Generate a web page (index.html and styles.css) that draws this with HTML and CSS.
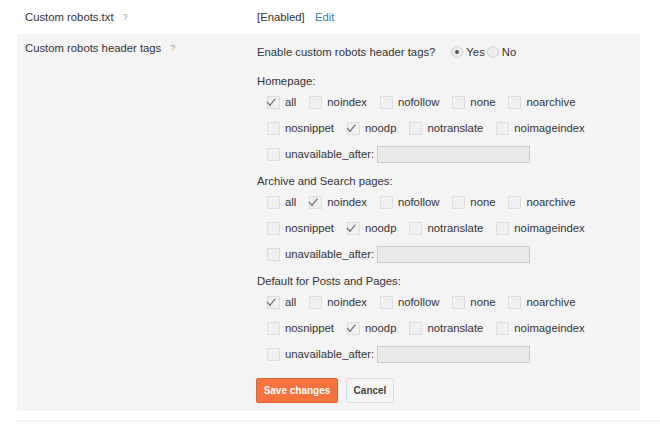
FILE: index.html
```html
<!DOCTYPE html>
<html>
<head>
<meta charset="utf-8">
<link rel="stylesheet" href="styles.css">
</head>
<body>
<div class="page">
  <div class="row row-top">
    <div class="label">Custom robots.txt <span class="help">?</span></div>
    <div class="value">[Enabled] <a class="edit" href="#">Edit</a></div>
  </div>
  <div class="row panel">
    <div class="label label-panel">Custom robots header tags <span class="help">?</span></div>
    <div class="value value-panel">
      <div class="enable">
        <span>Enable custom robots header tags?</span>
        <span class="radios">
          <span class="radio on"></span><span class="rlabel">Yes</span>
          <span class="radio"></span><span class="rlabel">No</span>
        </span>
      </div>

      <div class="section first">
        <div class="sec-title">Homepage:</div>
        <div class="cbrow">
          <span class="cb on"></span><span class="cbl">all</span>
          <span class="cb"></span><span class="cbl">noindex</span>
          <span class="cb"></span><span class="cbl">nofollow</span>
          <span class="cb"></span><span class="cbl">none</span>
          <span class="cb"></span><span class="cbl">noarchive</span>
        </div>
        <div class="cbrow">
          <span class="cb"></span><span class="cbl">nosnippet</span>
          <span class="cb on"></span><span class="cbl">noodp</span>
          <span class="cb"></span><span class="cbl">notranslate</span>
          <span class="cb"></span><span class="cbl">noimageindex</span>
        </div>
        <div class="cbrow">
          <span class="cb"></span><span class="cbl tight">unavailable_after:</span>
          <span class="textbox"></span>
        </div>
      </div>

      <div class="section">
        <div class="sec-title">Archive and Search pages:</div>
        <div class="cbrow">
          <span class="cb"></span><span class="cbl">all</span>
          <span class="cb on"></span><span class="cbl">noindex</span>
          <span class="cb"></span><span class="cbl">nofollow</span>
          <span class="cb"></span><span class="cbl">none</span>
          <span class="cb"></span><span class="cbl">noarchive</span>
        </div>
        <div class="cbrow">
          <span class="cb"></span><span class="cbl">nosnippet</span>
          <span class="cb on"></span><span class="cbl">noodp</span>
          <span class="cb"></span><span class="cbl">notranslate</span>
          <span class="cb"></span><span class="cbl">noimageindex</span>
        </div>
        <div class="cbrow">
          <span class="cb"></span><span class="cbl tight">unavailable_after:</span>
          <span class="textbox"></span>
        </div>
      </div>

      <div class="section">
        <div class="sec-title">Default for Posts and Pages:</div>
        <div class="cbrow">
          <span class="cb on"></span><span class="cbl">all</span>
          <span class="cb"></span><span class="cbl">noindex</span>
          <span class="cb"></span><span class="cbl">nofollow</span>
          <span class="cb"></span><span class="cbl">none</span>
          <span class="cb"></span><span class="cbl">noarchive</span>
        </div>
        <div class="cbrow">
          <span class="cb"></span><span class="cbl">nosnippet</span>
          <span class="cb on"></span><span class="cbl">noodp</span>
          <span class="cb"></span><span class="cbl">notranslate</span>
          <span class="cb"></span><span class="cbl">noimageindex</span>
        </div>
        <div class="cbrow">
          <span class="cb"></span><span class="cbl tight">unavailable_after:</span>
          <span class="textbox"></span>
        </div>
      </div>

      <div class="buttons">
        <button class="btn btn-save">Save changes</button>
        <button class="btn btn-cancel">Cancel</button>
      </div>
    </div>
  </div>
  <div class="rule"></div>
</div>
</body>
</html>
```

FILE: styles.css
```css
html, body {
  margin: 0;
  padding: 0;
  background: #ffffff;
}
body {
  font-family: "Liberation Sans", Arial, sans-serif;
  font-size: 11.3px;
  color: #333333;
}
.page {
  width: 660px;
}
.row {
  display: flex;
}
.row-top {
  height: 34px;
  align-items: center;
  padding-left: 25px;
}
.label {
  width: 232px;
  flex: none;
  line-height: 16px;
}
.help {
  font-size: 8.5px;
  color: #999999;
  margin-left: 6px;
  vertical-align: 1px;
}
.edit {
  color: #3e7f9f;
  text-decoration: none;
  margin-left: 7px;
}
.panel {
  margin-left: 17px;
  width: 615px;
  padding-left: 8px;
  background: #f4f4f4;
  padding-bottom: 8px;
}
.label-panel {
  padding-top: 6px;
}
.value-panel {
  padding-top: 9px;
}
.enable {
  display: flex;
  align-items: center;
  height: 18px;
}
.radios {
  display: inline-flex;
  align-items: center;
  margin-left: 16px;
}
.radio {
  width: 10px;
  height: 10px;
  border-radius: 50%;
  border: 1px solid #d0d0d0;
  background: #eeeeee;
  box-sizing: content-box;
  display: inline-block;
  position: relative;
}
.radio.on::after {
  content: "";
  position: absolute;
  left: 3px;
  top: 3px;
  width: 4px;
  height: 4px;
  border-radius: 50%;
  background: #555555;
}
.rlabel {
  margin-left: 3px;
  margin-right: 2px;
}
.section {
  margin-top: 6px;
}
.section.first {
  margin-top: 12px;
}
.sec-title {
  line-height: 16px;
}
.cbrow {
  height: 26px;
  display: flex;
  align-items: center;
  padding-left: 10px;
}
.cb {
  width: 11px;
  height: 11px;
  border: 1px solid #dddddd;
  background: #f0f0f0;
  flex: none;
  position: relative;
  margin-right: 5px;
}
.cb.on::after {
  content: "";
  position: absolute;
  width: 8px;
  height: 4px;
  border-left: 1.4px solid #555555;
  border-bottom: 1.4px solid #555555;
  transform: rotate(-50deg) skewX(-8deg);
  transform-origin: 0 100%;
  top: 4px;
  left: 2px;
}
.cbl {
  margin-right: 13px;
}
.cbl.tight {
  margin-right: 3px;
}
.textbox {
  width: 151px;
  height: 15px;
  border: 1px solid #cccccc;
  background: #ebebeb;
  display: inline-block;
}
.buttons {
  display: flex;
  margin-top: 11px;
  gap: 8px;
}
.btn {
  font-family: "Liberation Sans", Arial, sans-serif;
  font-size: 10px;
  font-weight: bold;
  height: 25px;
  padding: 0;
  border-radius: 2px;
  white-space: nowrap;
  cursor: pointer;
}
.btn-save {
  width: 82px;
  background: #f4733e;
  border: 1px solid #e0632f;
  color: #ffffff;
  margin-left: -1px;
}
.btn-cancel {
  width: 48px;
  background: #f5f5f5;
  border: 1px solid #dcdcdc;
  color: #444444;
}
.rule {
  margin-left: 16px;
  margin-top: 9px;
  height: 2px;
  width: 644px;
  background: #f4f4f4;
}
```
